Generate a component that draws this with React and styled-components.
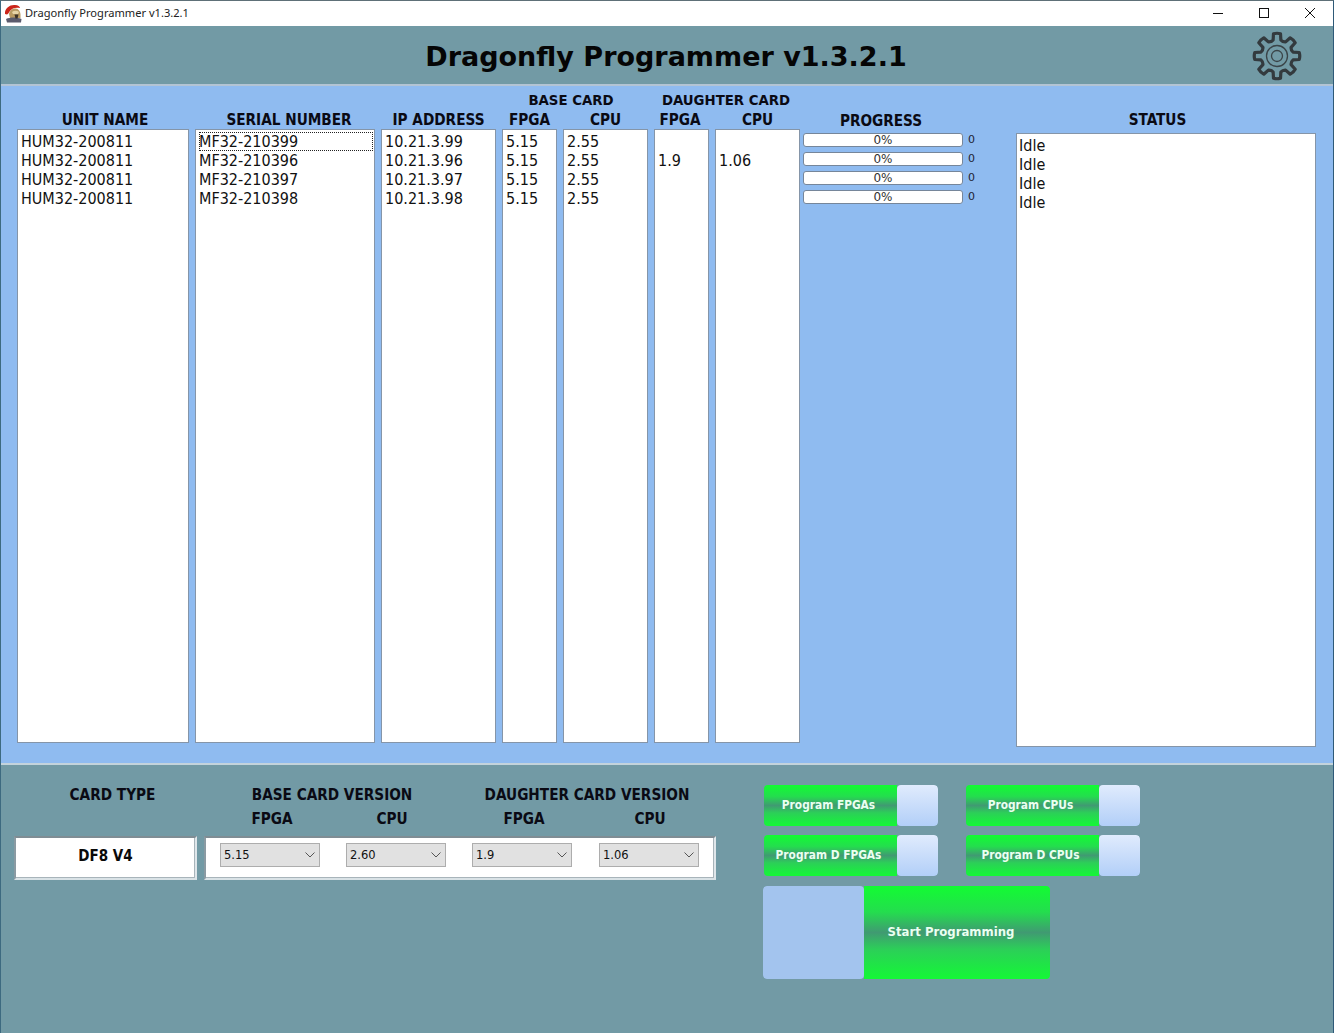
import React from "react";
import styled, { createGlobalStyle } from "styled-components";

const Global = createGlobalStyle`
  html, body { margin: 0; padding: 0; background: #729aa5; }
  * { box-sizing: border-box; }
`;

const tahoma = `"DejaVu Sans Condensed", "DejaVu Sans", sans-serif`;

const Window = styled.div`
  width: 1334px;
  height: 1033px;
  display: flex;
  flex-direction: column;
  overflow: hidden;
  background: #729aa5;
  border-top: 1px solid #5e7078;
  border-left: 1px solid #3d6a80;
  border-right: 1px solid #2f5a78;
  color: #0a0a14;
`;
const TitleBar = styled.div`
  height: 25px;
  flex: none;
  display: flex;
  align-items: center;
  background: #fff;
  padding-left: 3px;
`;
const AppIcon = styled.svg`
  width: 18px;
  height: 19px;
  flex: none;
`;
const WindowTitle = styled.div`
  margin-left: 3px;
  font: 11.1px "Noto Sans", sans-serif;
  color: #222;
  flex: 1;
  padding-bottom: 2px;
`;
const WinButtons = styled.div`
  display: flex;
  height: 100%;
`;
const WinButton = styled.div`
  width: 46px;
  display: flex;
  align-items: center;
  justify-content: center;
  padding-bottom: 2px;
  svg { display: block; }
`;
const Header = styled.div`
  height: 58px;
  flex: none;
  display: grid;
  grid-template-columns: 1fr auto 1fr;
  align-items: center;
`;
const AppTitle = styled.h1`
  grid-column: 2;
  margin: 2px 0 0 -2px;
  font: bold 27px "DejaVu Sans", sans-serif;
  color: #050505;
  white-space: nowrap;
`;
const GearIcon = styled.svg`
  grid-column: 3;
  justify-self: end;
  width: 50px;
  height: 50px;
  margin: 2px 31px 0 0;
`;
const TopPanel = styled.div`
  height: 679px;
  flex: none;
  background: #8fbbf0;
  border-top: 2px solid #b3c4d4;
  padding: 3px 17px 16px 16px;
  display: flex;
  align-items: stretch;
`;
const Column = styled.div`
  width: ${(p) => p.$w}px;
  margin-left: ${(p) => p.$ml ?? 6}px;
  display: flex;
  flex-direction: column;
  justify-content: flex-end;
  margin-bottom: 4px;
  &:first-child { margin-left: 0; }
`;
const Group = styled.div`
  display: flex;
  flex-direction: column;
  margin-left: 6px;
`;
const GroupColumns = styled.div`
  flex: 1;
  display: flex;
  ${Column}:first-child { margin-left: 0; }
`;
const Label = styled.div`
  height: 20px;
  flex: none;
  font: bold ${(p) => p.$fs ?? 15.2}px/22px ${tahoma};
  text-align: center;
  white-space: nowrap;
  padding-left: ${(p) => p.$pl ?? 0}px;
  padding-right: ${(p) => p.$pr ?? 0}px;
`;
const ListBox = styled.div`
  flex: none;
  height: 614px;
  background: #fff;
  border: 1px solid #8595a8;
  padding: 2px 3px;
  font: 16px/19px ${tahoma};
  color: #111;
`;
const ListRow = styled.div`
  height: 19px;
  white-space: nowrap;
  margin-right: -2px;
  outline: ${(p) => (p.$focus ? "1px dotted #222" : "none")};
  outline-offset: -1px;
`;
const ProgressColumn = styled.div`
  width: 172px;
  margin-left: 3px;
  display: flex;
  flex-direction: column;
  padding-top: 21px;
`;
const ProgressList = styled.div`
  margin-top: 3px;
  display: flex;
  flex-direction: column;
  gap: 5px;
`;
const ProgressRow = styled.div`
  display: flex;
  align-items: center;
  height: 14px;
`;
const ProgressBar = styled.div`
  width: 160px;
  height: 14px;
  background: #fff;
  border: 1px solid #76869a;
  border-radius: 3px;
  font: 12px/12px "DejaVu Sans", sans-serif;
  text-align: center;
  color: #333;
`;
const ProgressValue = styled.div`
  margin-left: 5px;
  font: 11px/14px "DejaVu Sans", sans-serif;
  color: #223;
`;
const StatusColumn = styled.div`
  width: 300px;
  margin-left: 41px;
  display: flex;
  flex-direction: column;
  padding-top: 20px;
`;
const StatusBox = styled(ListBox)`
  margin-top: 4px;
  padding-left: 2px;
`;
const Bottom = styled.div`
  flex: 1;
  border-top: 2px solid #c3d3dc;
  display: flex;
  padding: 20px 0 0 13px;
`;
const CardColumn = styled.div`
  width: 183px;
  display: flex;
  flex-direction: column;
`;
const BottomLabel = styled.div`
  height: 24px;
  font: bold 15.2px/20px ${tahoma};
  text-align: center;
  white-space: nowrap;
  padding-left: ${(p) => p.$pl ?? 0}px;
`;
const Spacer = styled.div`
  height: 27px;
  flex: none;
`;
const Inset = styled.div`
  height: 44px;
  background: #fff;
  border-top: 2px solid #7f8d94;
  border-left: 2px solid #8a9aa2;
  border-right: 2px solid #dfe6ea;
  border-bottom: 2px solid #d9e2e6;
  box-shadow: inset -1px -1px 0 #a8b4ba;
`;
const CardValue = styled(Inset)`
  display: flex;
  align-items: center;
  justify-content: center;
  font: bold 15px ${tahoma};
  color: #0a0a0a;
  padding: 0 0 5px 0;
`;
const VersionColumn = styled.div`
  width: 512px;
  margin-left: 7px;
  display: flex;
  flex-direction: column;
`;
const TitleGrid = styled.div`
  display: grid;
  grid-template-columns: 256px 254px;
  height: 24px;
`;
const SubGrid = styled.div`
  display: grid;
  grid-template-columns: 136px 104px 160px 92px;
  height: 27px;
`;
const VersionBox = styled(Inset)`
  display: flex;
  align-items: flex-start;
  padding: 5px 0 0 14px;
  gap: 26px;
`;
const SelectWrap = styled.div`
  position: relative;
  width: 100px;
  height: 24px;
  margin-right: ${(p) => p.$mr ?? 0}px;
`;
const Select = styled.select`
  appearance: none;
  width: 100%;
  height: 100%;
  display: block;
  background: #e1e1e1;
  border: 1px solid #adadad;
  border-radius: 0;
  padding: 0 0 0 3px;
  font: 11.5px "DejaVu Sans", sans-serif;
  color: #111;
  outline: none;
`;
const Chevron = styled.svg`
  position: absolute;
  right: 5px;
  top: 9px;
  width: 10px;
  height: 6px;
  pointer-events: none;
`;
const Actions = styled.div`
  margin-left: 47px;
  display: flex;
  flex-direction: column;
  gap: 9px;
`;
const ActionRow = styled.div`
  display: flex;
  gap: 28px;
`;
const ActionStack = styled.div`
  display: flex;
  flex-direction: column;
  gap: 9px;
  padding-left: 1px;
`;
const greenGradient = `linear-gradient(180deg, #12fc32 0%, #24dd4e 28%, #409a72 50%, #2ccf58 68%, #14f836 100%)`;
const ToggleButton = styled.div`
  width: 174px;
  height: 41px;
  display: flex;
  border-radius: 4px;
  overflow: hidden;
`;
const ToggleFace = styled.div`
  flex: 1;
  background: ${greenGradient};
  display: flex;
  align-items: center;
  justify-content: center;
  font: bold 11.8px "DejaVu Sans Condensed", "DejaVu Sans", sans-serif;
  color: #eafff0;
  padding: 0 4px 2px 0;
  white-space: nowrap;
`;
const ToggleKnob = styled.div`
  width: 41px;
  border-radius: 4px;
  background: linear-gradient(180deg, #e0ebfd 0%, #b2cff8 100%);
`;
const StartButton = styled.div`
  width: 287px;
  height: 93px;
  display: flex;
  border-radius: 4px;
  overflow: hidden;
  margin-top: 1px;
`;
const StartKnob = styled.div`
  width: 101px;
  border-radius: 4px;
  background: #a3c4ee;
`;
const StartFace = styled(ToggleFace)`
  font-size: 13px;
  padding: 0 12px 3px 0;
`;

const units = ["MF32-210399", "MF32-210396", "MF32-210397", "MF32-210398"];
const ips = ["10.21.3.99", "10.21.3.96", "10.21.3.97", "10.21.3.98"];
const four = (v) => [v, v, v, v];

function gearPath(cx, cy, rOuter, rInner, n) {
  const step = (Math.PI * 2) / n;
  const f = (r, a) => `${(cx + r * Math.sin(a)).toFixed(2)} ${(cy - r * Math.cos(a)).toFixed(2)}`;
  let d = "";
  for (let i = 0; i < n; i++) {
    const a = i * step;
    const t = step * 0.2;
    const b = step * 0.3;
    d += `${i === 0 ? "M" : "L"}${f(rInner, a - b)} L${f(rOuter, a - t)} Q${f(rOuter + 0.8, a)} ${f(rOuter, a + t)} L${f(rInner, a + b)} `;
    d += `Q${f(rInner - 1.5, a + step / 2)} ${f(rInner, a + step - b)} `;
  }
  return d + "Z";
}

function List({ rows, focusFirst }) {
  return (
    <ListBox>
      {rows.map((r, i) => (
        <ListRow key={i} $focus={focusFirst && i === 0}>{r}</ListRow>
      ))}
    </ListBox>
  );
}

function Toggle({ children }) {
  return (
    <ToggleButton>
      <ToggleFace>{children}</ToggleFace>
      <ToggleKnob />
    </ToggleButton>
  );
}

function VersionSelect({ value, mr }) {
  return (
    <SelectWrap $mr={mr}>
      <Select defaultValue={value}>
        <option>{value}</option>
      </Select>
      <Chevron viewBox="0 0 10 6">
        <path d="M0.5 0.5 L5 5 L9.5 0.5" fill="none" stroke="#555" strokeWidth="1" />
      </Chevron>
    </SelectWrap>
  );
}

export default function App() {
  return (
    <>
      <Global />
      <Window>
        <TitleBar>
          <AppIcon viewBox="0 0 18 19">
            <path d="M1 10 C0.5 4 6 0.5 11 1 C14 1.2 16 2.5 16 4 C12 3 8 4 6 7 C5 8.5 4 10 3 10.5 Z" fill="#cb2418" />
            <path d="M5 10 C5.5 6.5 8.5 4.5 11.5 4.5 C14.5 4.5 16.5 7.5 16.5 11 L16.5 14 L6 14 Z" fill="#b99a62" />
            <path d="M8 8 C10 6.2 13 6.2 15 8 L14 10 L9 10 Z" fill="#e6d3a6" />
            <path d="M2 15 C6 13 13 13 17.5 15 L17 18.5 L3 18.5 Z" fill="#5b5b6d" />
            <path d="M10.5 10.5 L14.5 10.5 L13.5 14.5 L11.5 14.5 Z" fill="#3b3128" />
          </AppIcon>
          <WindowTitle>Dragonfly Programmer v1.3.2.1</WindowTitle>
          <WinButtons>
            <WinButton>
              <svg width="10" height="10" viewBox="0 0 10 10"><path d="M0 5.5 H10" stroke="#111" strokeWidth="1" /></svg>
            </WinButton>
            <WinButton>
              <svg width="10" height="10" viewBox="0 0 10 10"><rect x="0.5" y="0.5" width="9" height="9" fill="none" stroke="#111" strokeWidth="1" /></svg>
            </WinButton>
            <WinButton>
              <svg width="10" height="10" viewBox="0 0 10 10"><path d="M0 0 L10 10 M10 0 L0 10" stroke="#111" strokeWidth="1" /></svg>
            </WinButton>
          </WinButtons>
        </TitleBar>
        <Header>
          <AppTitle>Dragonfly Programmer v1.3.2.1</AppTitle>
          <GearIcon viewBox="0 0 50 50">
            <path d={gearPath(25, 25, 22.5, 16.5, 8)} fill="none" stroke="#333a3e" strokeWidth="3.2" strokeLinejoin="round" />
            <circle cx="25" cy="25" r="10.5" fill="none" stroke="#3a4448" strokeWidth="1.3" />
            <circle cx="25" cy="25" r="5.5" fill="none" stroke="#3a4448" strokeWidth="1.3" />
          </GearIcon>
        </Header>
        <TopPanel>
          <Column $w={172}>
            <Label $pl={4}>UNIT NAME</Label>
            <List rows={four("HUM32-200811")} />
          </Column>
          <Column $w={180}>
            <Label $pl={8}>SERIAL NUMBER</Label>
            <List rows={units} focusFirst />
          </Column>
          <Column $w={115}>
            <Label>IP ADDRESS</Label>
            <List rows={ips} />
          </Column>
          <Group>
            <Label $pr={8} $fs={14.8}>BASE CARD</Label>
            <GroupColumns>
              <Column $w={55}>
                <Label>FPGA</Label>
                <List rows={four("5.15")} />
              </Column>
              <Column $w={85}>
                <Label>CPU</Label>
                <List rows={four("2.55")} />
              </Column>
            </GroupColumns>
          </Group>
          <Group>
            <Label $pr={2} $fs={14.8}>DAUGHTER CARD</Label>
            <GroupColumns>
              <Column $w={55}>
                <Label $pr={3}>FPGA</Label>
                <List rows={["\u00a0", "1.9"]} />
              </Column>
              <Column $w={85}>
                <Label>CPU</Label>
                <List rows={["\u00a0", "1.06"]} />
              </Column>
            </GroupColumns>
          </Group>
          <ProgressColumn>
            <Label $pr={16}>PROGRESS</Label>
            <ProgressList>
              {[0, 1, 2, 3].map((i) => (
                <ProgressRow key={i}>
                  <ProgressBar>0%</ProgressBar>
                  <ProgressValue>0</ProgressValue>
                </ProgressRow>
              ))}
            </ProgressList>
          </ProgressColumn>
          <StatusColumn>
            <Label $pr={17}>STATUS</Label>
            <StatusBox>
              {four("Idle").map((s, i) => (
                <ListRow key={i}>{s}</ListRow>
              ))}
            </StatusBox>
          </StatusColumn>
        </TopPanel>
        <Bottom>
          <CardColumn>
            <BottomLabel $pl={14}>CARD TYPE</BottomLabel>
            <Spacer />
            <CardValue>DF8 V4</CardValue>
          </CardColumn>
          <VersionColumn>
            <TitleGrid>
              <BottomLabel>BASE CARD VERSION</BottomLabel>
              <BottomLabel>DAUGHTER CARD VERSION</BottomLabel>
            </TitleGrid>
            <SubGrid>
              <BottomLabel>FPGA</BottomLabel>
              <BottomLabel>CPU</BottomLabel>
              <BottomLabel>FPGA</BottomLabel>
              <BottomLabel>CPU</BottomLabel>
            </SubGrid>
            <VersionBox>
              <VersionSelect value="5.15" />
              <VersionSelect value="2.60" />
              <VersionSelect value="1.9" mr={1} />
              <VersionSelect value="1.06" />
            </VersionBox>
          </VersionColumn>
          <Actions>
            <ActionStack>
              <ActionRow>
                <Toggle>Program FPGAs</Toggle>
                <Toggle>Program CPUs</Toggle>
              </ActionRow>
              <ActionRow>
                <Toggle>Program D FPGAs</Toggle>
                <Toggle>Program D CPUs</Toggle>
              </ActionRow>
            </ActionStack>
            <StartButton>
              <StartKnob />
              <StartFace>Start Programming</StartFace>
            </StartButton>
          </Actions>
        </Bottom>
      </Window>
    </>
  );
}
